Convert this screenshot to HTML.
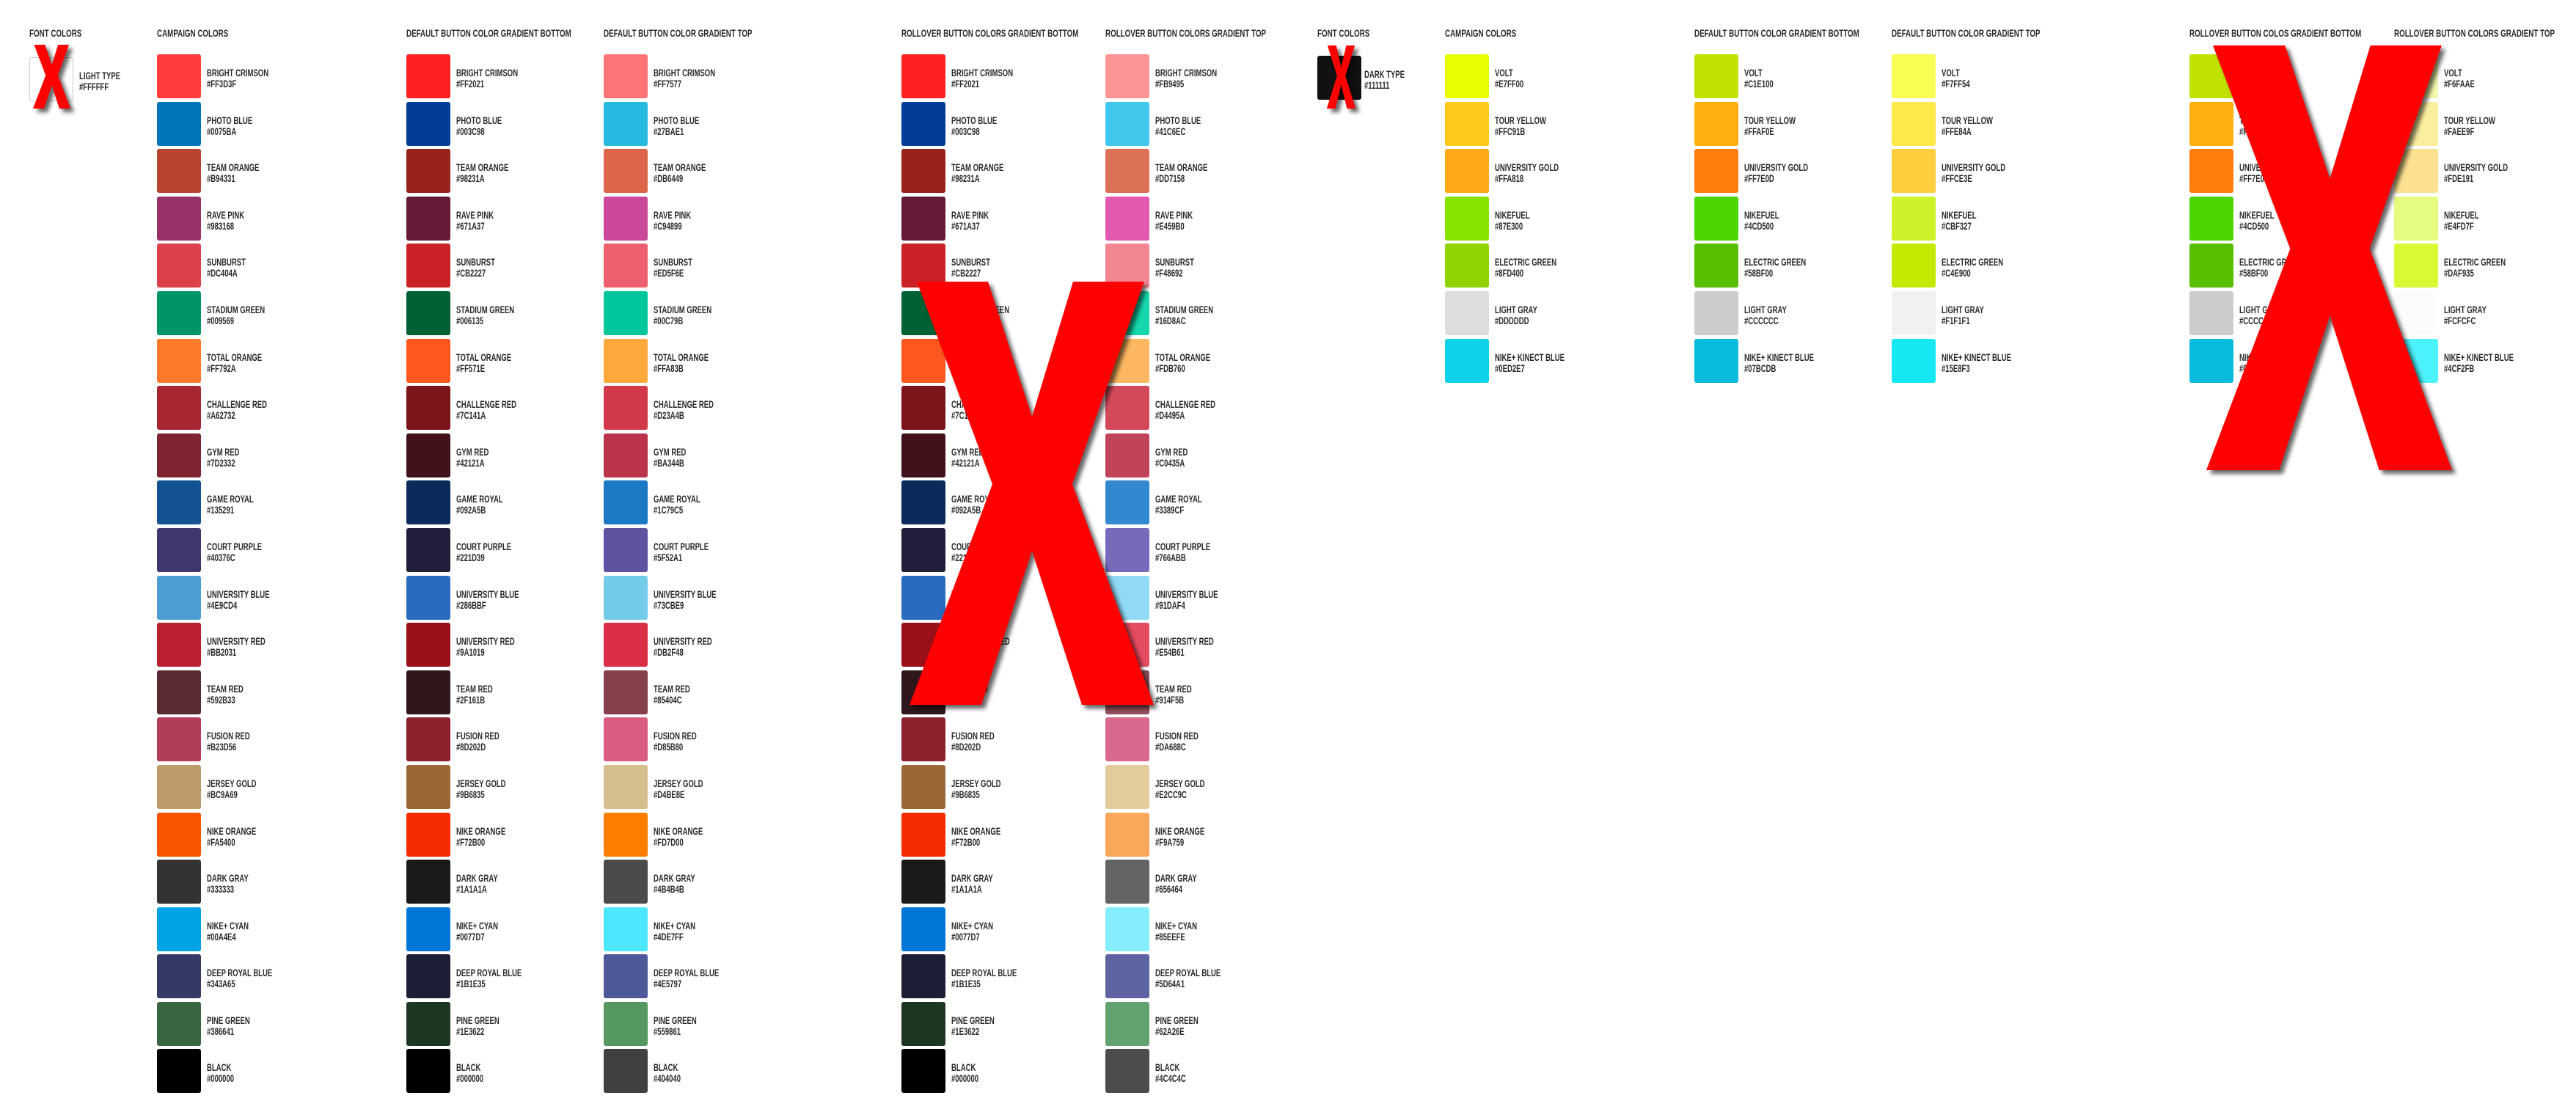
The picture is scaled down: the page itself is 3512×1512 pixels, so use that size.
<!DOCTYPE html>
<html><head><meta charset="utf-8">
<style>
html,body{margin:0;padding:0;background:#fff;width:3512px;height:1512px;overflow:hidden;position:relative}
.h{position:absolute;top:38px;font:bold 14px/14px "Liberation Sans",sans-serif;color:#2a2a2a;transform:scaleX(.7);transform-origin:0 0;white-space:nowrap}
.c{position:absolute;top:74px}
.r{position:relative;height:64.6px;width:240px}
.r i{position:absolute;left:0;top:0;width:60px;height:60px;border-radius:3px;display:block}
.r b{position:absolute;left:68px;top:18px;font:bold 14px/15px "Liberation Sans",sans-serif;color:#2a2a2a;transform:scaleX(.68);transform-origin:0 0;white-space:nowrap}
svg.x{position:absolute;overflow:visible;filter:drop-shadow(5px 5px 3px rgba(0,0,0,.6))}
</style></head><body>

<div class="h" style="left:40px">FONT COLORS</div>
<div class="h" style="left:214px">CAMPAIGN COLORS</div>
<div class="h" style="left:554px">DEFAULT BUTTON COLOR GRADIENT BOTTOM</div>
<div class="h" style="left:823px">DEFAULT BUTTON COLOR GRADIENT TOP</div>
<div class="h" style="left:1229px">ROLLOVER BUTTON COLORS GRADIENT BOTTOM</div>
<div class="h" style="left:1507px">ROLLOVER BUTTON COLORS GRADIENT TOP</div>

<div class="c" style="left:40px;top:78px"><div class="r"><i style="background:#fff;border:1px solid #ccc;width:58px;height:58px"></i><b>LIGHT TYPE<br>#FFFFFF</b></div></div>

<div class="c" style="left:214px">
<div class="r"><i style="background:#FF3D3F"></i><b>BRIGHT CRIMSON<br>#FF3D3F</b></div>
<div class="r"><i style="background:#0075BA"></i><b>PHOTO BLUE<br>#0075BA</b></div>
<div class="r"><i style="background:#B94331"></i><b>TEAM ORANGE<br>#B94331</b></div>
<div class="r"><i style="background:#983168"></i><b>RAVE PINK<br>#983168</b></div>
<div class="r"><i style="background:#DC404A"></i><b>SUNBURST<br>#DC404A</b></div>
<div class="r"><i style="background:#009569"></i><b>STADIUM GREEN<br>#009569</b></div>
<div class="r"><i style="background:#FF792A"></i><b>TOTAL ORANGE<br>#FF792A</b></div>
<div class="r"><i style="background:#A62732"></i><b>CHALLENGE RED<br>#A62732</b></div>
<div class="r"><i style="background:#7D2332"></i><b>GYM RED<br>#7D2332</b></div>
<div class="r"><i style="background:#135291"></i><b>GAME ROYAL<br>#135291</b></div>
<div class="r"><i style="background:#40376C"></i><b>COURT PURPLE<br>#40376C</b></div>
<div class="r"><i style="background:#4E9CD4"></i><b>UNIVERSITY BLUE<br>#4E9CD4</b></div>
<div class="r"><i style="background:#BB2031"></i><b>UNIVERSITY RED<br>#BB2031</b></div>
<div class="r"><i style="background:#592B33"></i><b>TEAM RED<br>#592B33</b></div>
<div class="r"><i style="background:#B23D56"></i><b>FUSION RED<br>#B23D56</b></div>
<div class="r"><i style="background:#BC9A69"></i><b>JERSEY GOLD<br>#BC9A69</b></div>
<div class="r"><i style="background:#FA5400"></i><b>NIKE ORANGE<br>#FA5400</b></div>
<div class="r"><i style="background:#333333"></i><b>DARK GRAY<br>#333333</b></div>
<div class="r"><i style="background:#00A4E4"></i><b>NIKE+ CYAN<br>#00A4E4</b></div>
<div class="r"><i style="background:#343A65"></i><b>DEEP ROYAL BLUE<br>#343A65</b></div>
<div class="r"><i style="background:#386641"></i><b>PINE GREEN<br>#386641</b></div>
<div class="r"><i style="background:#000000"></i><b>BLACK<br>#000000</b></div>
</div>

<div class="c" style="left:554px">
<div class="r"><i style="background:#FF2021"></i><b>BRIGHT CRIMSON<br>#FF2021</b></div>
<div class="r"><i style="background:#003C98"></i><b>PHOTO BLUE<br>#003C98</b></div>
<div class="r"><i style="background:#98231A"></i><b>TEAM ORANGE<br>#98231A</b></div>
<div class="r"><i style="background:#671A37"></i><b>RAVE PINK<br>#671A37</b></div>
<div class="r"><i style="background:#CB2227"></i><b>SUNBURST<br>#CB2227</b></div>
<div class="r"><i style="background:#006135"></i><b>STADIUM GREEN<br>#006135</b></div>
<div class="r"><i style="background:#FF571E"></i><b>TOTAL ORANGE<br>#FF571E</b></div>
<div class="r"><i style="background:#7C141A"></i><b>CHALLENGE RED<br>#7C141A</b></div>
<div class="r"><i style="background:#42121A"></i><b>GYM RED<br>#42121A</b></div>
<div class="r"><i style="background:#092A5B"></i><b>GAME ROYAL<br>#092A5B</b></div>
<div class="r"><i style="background:#221D39"></i><b>COURT PURPLE<br>#221D39</b></div>
<div class="r"><i style="background:#286BBF"></i><b>UNIVERSITY BLUE<br>#286BBF</b></div>
<div class="r"><i style="background:#9A1019"></i><b>UNIVERSITY RED<br>#9A1019</b></div>
<div class="r"><i style="background:#2F161B"></i><b>TEAM RED<br>#2F161B</b></div>
<div class="r"><i style="background:#8D202D"></i><b>FUSION RED<br>#8D202D</b></div>
<div class="r"><i style="background:#9B6835"></i><b>JERSEY GOLD<br>#9B6835</b></div>
<div class="r"><i style="background:#F72B00"></i><b>NIKE ORANGE<br>#F72B00</b></div>
<div class="r"><i style="background:#1A1A1A"></i><b>DARK GRAY<br>#1A1A1A</b></div>
<div class="r"><i style="background:#0077D7"></i><b>NIKE+ CYAN<br>#0077D7</b></div>
<div class="r"><i style="background:#1B1E35"></i><b>DEEP ROYAL BLUE<br>#1B1E35</b></div>
<div class="r"><i style="background:#1E3622"></i><b>PINE GREEN<br>#1E3622</b></div>
<div class="r"><i style="background:#000000"></i><b>BLACK<br>#000000</b></div>
</div>

<div class="c" style="left:823px">
<div class="r"><i style="background:#FF7577"></i><b>BRIGHT CRIMSON<br>#FF7577</b></div>
<div class="r"><i style="background:#27BAE1"></i><b>PHOTO BLUE<br>#27BAE1</b></div>
<div class="r"><i style="background:#DB6449"></i><b>TEAM ORANGE<br>#DB6449</b></div>
<div class="r"><i style="background:#C94899"></i><b>RAVE PINK<br>#C94899</b></div>
<div class="r"><i style="background:#ED5F6E"></i><b>SUNBURST<br>#ED5F6E</b></div>
<div class="r"><i style="background:#00C79B"></i><b>STADIUM GREEN<br>#00C79B</b></div>
<div class="r"><i style="background:#FFA83B"></i><b>TOTAL ORANGE<br>#FFA83B</b></div>
<div class="r"><i style="background:#D23A4B"></i><b>CHALLENGE RED<br>#D23A4B</b></div>
<div class="r"><i style="background:#BA344B"></i><b>GYM RED<br>#BA344B</b></div>
<div class="r"><i style="background:#1C79C5"></i><b>GAME ROYAL<br>#1C79C5</b></div>
<div class="r"><i style="background:#5F52A1"></i><b>COURT PURPLE<br>#5F52A1</b></div>
<div class="r"><i style="background:#73CBE9"></i><b>UNIVERSITY BLUE<br>#73CBE9</b></div>
<div class="r"><i style="background:#DB2F48"></i><b>UNIVERSITY RED<br>#DB2F48</b></div>
<div class="r"><i style="background:#85404C"></i><b>TEAM RED<br>#85404C</b></div>
<div class="r"><i style="background:#D85B80"></i><b>FUSION RED<br>#D85B80</b></div>
<div class="r"><i style="background:#D4BE8E"></i><b>JERSEY GOLD<br>#D4BE8E</b></div>
<div class="r"><i style="background:#FD7D00"></i><b>NIKE ORANGE<br>#FD7D00</b></div>
<div class="r"><i style="background:#4B4B4B"></i><b>DARK GRAY<br>#4B4B4B</b></div>
<div class="r"><i style="background:#4DE7FF"></i><b>NIKE+ CYAN<br>#4DE7FF</b></div>
<div class="r"><i style="background:#4E5797"></i><b>DEEP ROYAL BLUE<br>#4E5797</b></div>
<div class="r"><i style="background:#559861"></i><b>PINE GREEN<br>#559861</b></div>
<div class="r"><i style="background:#404040"></i><b>BLACK<br>#404040</b></div>
</div>

<div class="c" style="left:1229px">
<div class="r"><i style="background:#FF2021"></i><b>BRIGHT CRIMSON<br>#FF2021</b></div>
<div class="r"><i style="background:#003C98"></i><b>PHOTO BLUE<br>#003C98</b></div>
<div class="r"><i style="background:#98231A"></i><b>TEAM ORANGE<br>#98231A</b></div>
<div class="r"><i style="background:#671A37"></i><b>RAVE PINK<br>#671A37</b></div>
<div class="r"><i style="background:#CB2227"></i><b>SUNBURST<br>#CB2227</b></div>
<div class="r"><i style="background:#006135"></i><b>STADIUM GREEN<br>#006135</b></div>
<div class="r"><i style="background:#FF571E"></i><b>TOTAL ORANGE<br>#FF571E</b></div>
<div class="r"><i style="background:#7C141A"></i><b>CHALLENGE RED<br>#7C141A</b></div>
<div class="r"><i style="background:#42121A"></i><b>GYM RED<br>#42121A</b></div>
<div class="r"><i style="background:#092A5B"></i><b>GAME ROYAL<br>#092A5B</b></div>
<div class="r"><i style="background:#221D39"></i><b>COURT PURPLE<br>#221D39</b></div>
<div class="r"><i style="background:#286BBF"></i><b>UNIVERSITY BLUE<br>#286BBF</b></div>
<div class="r"><i style="background:#9A1019"></i><b>UNIVERSITY RED<br>#9A1019</b></div>
<div class="r"><i style="background:#2F161B"></i><b>TEAM RED<br>#2F161B</b></div>
<div class="r"><i style="background:#8D202D"></i><b>FUSION RED<br>#8D202D</b></div>
<div class="r"><i style="background:#9B6835"></i><b>JERSEY GOLD<br>#9B6835</b></div>
<div class="r"><i style="background:#F72B00"></i><b>NIKE ORANGE<br>#F72B00</b></div>
<div class="r"><i style="background:#1A1A1A"></i><b>DARK GRAY<br>#1A1A1A</b></div>
<div class="r"><i style="background:#0077D7"></i><b>NIKE+ CYAN<br>#0077D7</b></div>
<div class="r"><i style="background:#1B1E35"></i><b>DEEP ROYAL BLUE<br>#1B1E35</b></div>
<div class="r"><i style="background:#1E3622"></i><b>PINE GREEN<br>#1E3622</b></div>
<div class="r"><i style="background:#000000"></i><b>BLACK<br>#000000</b></div>
</div>

<div class="c" style="left:1507px">
<div class="r"><i style="background:#FB9495"></i><b>BRIGHT CRIMSON<br>#FB9495</b></div>
<div class="r"><i style="background:#41C6EC"></i><b>PHOTO BLUE<br>#41C6EC</b></div>
<div class="r"><i style="background:#DD7158"></i><b>TEAM ORANGE<br>#DD7158</b></div>
<div class="r"><i style="background:#E459B0"></i><b>RAVE PINK<br>#E459B0</b></div>
<div class="r"><i style="background:#F48692"></i><b>SUNBURST<br>#F48692</b></div>
<div class="r"><i style="background:#16D8AC"></i><b>STADIUM GREEN<br>#16D8AC</b></div>
<div class="r"><i style="background:#FDB760"></i><b>TOTAL ORANGE<br>#FDB760</b></div>
<div class="r"><i style="background:#D4495A"></i><b>CHALLENGE RED<br>#D4495A</b></div>
<div class="r"><i style="background:#C0435A"></i><b>GYM RED<br>#C0435A</b></div>
<div class="r"><i style="background:#3389CF"></i><b>GAME ROYAL<br>#3389CF</b></div>
<div class="r"><i style="background:#766ABB"></i><b>COURT PURPLE<br>#766ABB</b></div>
<div class="r"><i style="background:#91DAF4"></i><b>UNIVERSITY BLUE<br>#91DAF4</b></div>
<div class="r"><i style="background:#E54B61"></i><b>UNIVERSITY RED<br>#E54B61</b></div>
<div class="r"><i style="background:#914F5B"></i><b>TEAM RED<br>#914F5B</b></div>
<div class="r"><i style="background:#DA688C"></i><b>FUSION RED<br>#DA688C</b></div>
<div class="r"><i style="background:#E2CC9C"></i><b>JERSEY GOLD<br>#E2CC9C</b></div>
<div class="r"><i style="background:#F9A759"></i><b>NIKE ORANGE<br>#F9A759</b></div>
<div class="r"><i style="background:#656464"></i><b>DARK GRAY<br>#656464</b></div>
<div class="r"><i style="background:#85EEFE"></i><b>NIKE+ CYAN<br>#85EEFE</b></div>
<div class="r"><i style="background:#5D64A1"></i><b>DEEP ROYAL BLUE<br>#5D64A1</b></div>
<div class="r"><i style="background:#62A26E"></i><b>PINE GREEN<br>#62A26E</b></div>
<div class="r"><i style="background:#4C4C4C"></i><b>BLACK<br>#4C4C4C</b></div>
</div>

<div class="h" style="left:1796px">FONT COLORS</div>
<div class="h" style="left:1970px">CAMPAIGN COLORS</div>
<div class="h" style="left:2310px">DEFAULT BUTTON COLOR GRADIENT BOTTOM</div>
<div class="h" style="left:2579px">DEFAULT BUTTON COLOR GRADIENT TOP</div>
<div class="h" style="left:2985px">ROLLOVER BUTTON COLOS GRADIENT BOTTOM</div>
<div class="h" style="left:3264px">ROLLOVER BUTTON COLORS GRADIENT TOP</div>

<div class="c" style="left:1796px;top:76px"><div class="r"><i style="background:#111111"></i><b style="left:64px">DARK TYPE<br>#111111</b></div></div>

<div class="c" style="left:1970px">
<div class="r"><i style="background:#E7FF00"></i><b>VOLT<br>#E7FF00</b></div>
<div class="r"><i style="background:#FFC91B"></i><b>TOUR YELLOW<br>#FFC91B</b></div>
<div class="r"><i style="background:#FFA818"></i><b>UNIVERSITY GOLD<br>#FFA818</b></div>
<div class="r"><i style="background:#87E300"></i><b>NIKEFUEL<br>#87E300</b></div>
<div class="r"><i style="background:#8FD400"></i><b>ELECTRIC GREEN<br>#8FD400</b></div>
<div class="r"><i style="background:#DDDDDD"></i><b>LIGHT GRAY<br>#DDDDDD</b></div>
<div class="r"><i style="background:#0ED2E7"></i><b>NIKE+ KINECT BLUE<br>#0ED2E7</b></div>
</div>

<div class="c" style="left:2310px">
<div class="r"><i style="background:#C1E100"></i><b>VOLT<br>#C1E100</b></div>
<div class="r"><i style="background:#FFAF0E"></i><b>TOUR YELLOW<br>#FFAF0E</b></div>
<div class="r"><i style="background:#FF7E0D"></i><b>UNIVERSITY GOLD<br>#FF7E0D</b></div>
<div class="r"><i style="background:#4CD500"></i><b>NIKEFUEL<br>#4CD500</b></div>
<div class="r"><i style="background:#58BF00"></i><b>ELECTRIC GREEN<br>#58BF00</b></div>
<div class="r"><i style="background:#CCCCCC"></i><b>LIGHT GRAY<br>#CCCCCC</b></div>
<div class="r"><i style="background:#07BCDB"></i><b>NIKE+ KINECT BLUE<br>#07BCDB</b></div>
</div>

<div class="c" style="left:2579px">
<div class="r"><i style="background:#F7FF54"></i><b>VOLT<br>#F7FF54</b></div>
<div class="r"><i style="background:#FFE84A"></i><b>TOUR YELLOW<br>#FFE84A</b></div>
<div class="r"><i style="background:#FFCE3E"></i><b>UNIVERSITY GOLD<br>#FFCE3E</b></div>
<div class="r"><i style="background:#CBF327"></i><b>NIKEFUEL<br>#CBF327</b></div>
<div class="r"><i style="background:#C4E900"></i><b>ELECTRIC GREEN<br>#C4E900</b></div>
<div class="r"><i style="background:#F1F1F1"></i><b>LIGHT GRAY<br>#F1F1F1</b></div>
<div class="r"><i style="background:#15E8F3"></i><b>NIKE+ KINECT BLUE<br>#15E8F3</b></div>
</div>

<div class="c" style="left:2985px">
<div class="r"><i style="background:#C1E100"></i><b>VOLT<br>#C1E100</b></div>
<div class="r"><i style="background:#FFAF0E"></i><b>TOUR YELLOW<br>#FFAF0E</b></div>
<div class="r"><i style="background:#FF7E0D"></i><b>UNIVERSITY GOLD<br>#FF7E0D</b></div>
<div class="r"><i style="background:#4CD500"></i><b>NIKEFUEL<br>#4CD500</b></div>
<div class="r"><i style="background:#58BF00"></i><b>ELECTRIC GREEN<br>#58BF00</b></div>
<div class="r"><i style="background:#CCCCCC"></i><b>LIGHT GRAY<br>#CCCCCC</b></div>
<div class="r"><i style="background:#07BCDB"></i><b>NIKE+ KINECT BLUE<br>#07BCDB</b></div>
</div>

<div class="c" style="left:3264px">
<div class="r"><i style="background:#F6FAAE"></i><b>VOLT<br>#F6FAAE</b></div>
<div class="r"><i style="background:#FAEE9F"></i><b>TOUR YELLOW<br>#FAEE9F</b></div>
<div class="r"><i style="background:#FDE191"></i><b>UNIVERSITY GOLD<br>#FDE191</b></div>
<div class="r"><i style="background:#E4FD7F"></i><b>NIKEFUEL<br>#E4FD7F</b></div>
<div class="r"><i style="background:#DAF935"></i><b>ELECTRIC GREEN<br>#DAF935</b></div>
<div class="r"><i style="background:#FCFCFC"></i><b>LIGHT GRAY<br>#FCFCFC</b></div>
<div class="r"><i style="background:#4CF2FB"></i><b>NIKE+ KINECT BLUE<br>#4CF2FB</b></div>
</div>

<svg class="x" style="left:45px;top:61px;width:51px;height:87px" viewBox="0 0 333 577" preserveAspectRatio="none"><polygon fill="#f00" points="10,0 107,0 167,184 223,0 320,0 222,276 333,577 235,577 167,367 98,577 0,577 113,276"/></svg>
<svg class="x" style="left:1804px;top:62px;width:49px;height:86px" viewBox="0 0 333 577" preserveAspectRatio="none"><polygon fill="#f00" points="40,0 120,0 167,200 213,0 293,0 205,276 300,577 220,577 167,360 113,577 33,577 128,276"/></svg>
<svg class="x" style="left:1240px;top:384px;width:333px;height:577px" viewBox="0 0 333 577" preserveAspectRatio="none"><polygon fill="#f00" points="10,0 107,0 167,184 223,0 320,0 222,276 333,577 235,577 167,367 98,577 0,577 113,276"/></svg>
<svg class="x" style="left:3008px;top:62px;width:334px;height:579px" viewBox="0 0 333 577" preserveAspectRatio="none"><polygon fill="#f00" points="9,0 107,0 168,181 223,0 320,0 222,276 334,577 235,577 168,367 99,577 0,577 114,276"/></svg>

</body></html>
